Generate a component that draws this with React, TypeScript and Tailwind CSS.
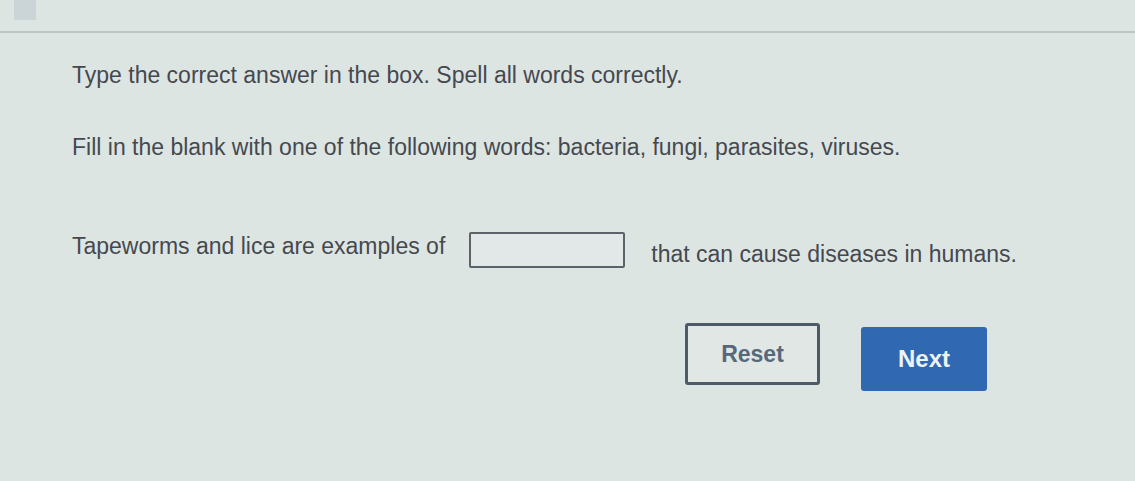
export default function App() {
  return (
    <div
      className="w-[1135px] h-[481px] overflow-hidden bg-[#dde5e3] text-[#45494f]"
      style={{ fontFamily: '"Liberation Sans", Arial, sans-serif' }}
    >
      {/* top bar */}
      <div className="h-[33px] border-b-2 border-[#bcc6c7] flex items-start pl-[14px]">
        <div className="w-[22px] h-[20px] bg-[#cbd4d6]" />
      </div>

      <div className="pl-[72px] pt-[28px]">
        <p className="text-[23px] leading-[28px]">
          Type the correct answer in the box. Spell all words correctly.
        </p>
        <p className="text-[23px] leading-[28px] mt-[44px]">
          Fill in the blank with one of the following words: bacteria, fungi, parasites, viruses.
        </p>

        <div className="flex items-center mt-[71px] text-[23px] leading-[28px]">
          <span className="-mt-[8px]">Tapeworms and lice are examples of</span>
          <input
            type="text"
            aria-label="answer"
            className="ml-[24px] mr-[26px] w-[156px] h-[36px] border-2 border-[#5c6268] rounded-[2px] bg-[#e1e8e7] outline-none"
          />
          <span className="mt-[8px]">that can cause diseases in humans.</span>
        </div>

        <div className="flex items-start mt-[55px] pl-[613px] gap-[41px]">
          <button className="w-[135px] h-[62px] border-[3px] border-[#4d5a68] rounded-[3px] bg-[#e0e7e5] text-[#56697c] font-bold text-[23px]">
            Reset
          </button>
          <button className="mt-[4px] w-[126px] h-[64px] rounded-[3px] bg-[#3069b1] text-[#eef3f8] font-bold text-[24px]">
            Next
          </button>
        </div>
      </div>
    </div>
  );
}
